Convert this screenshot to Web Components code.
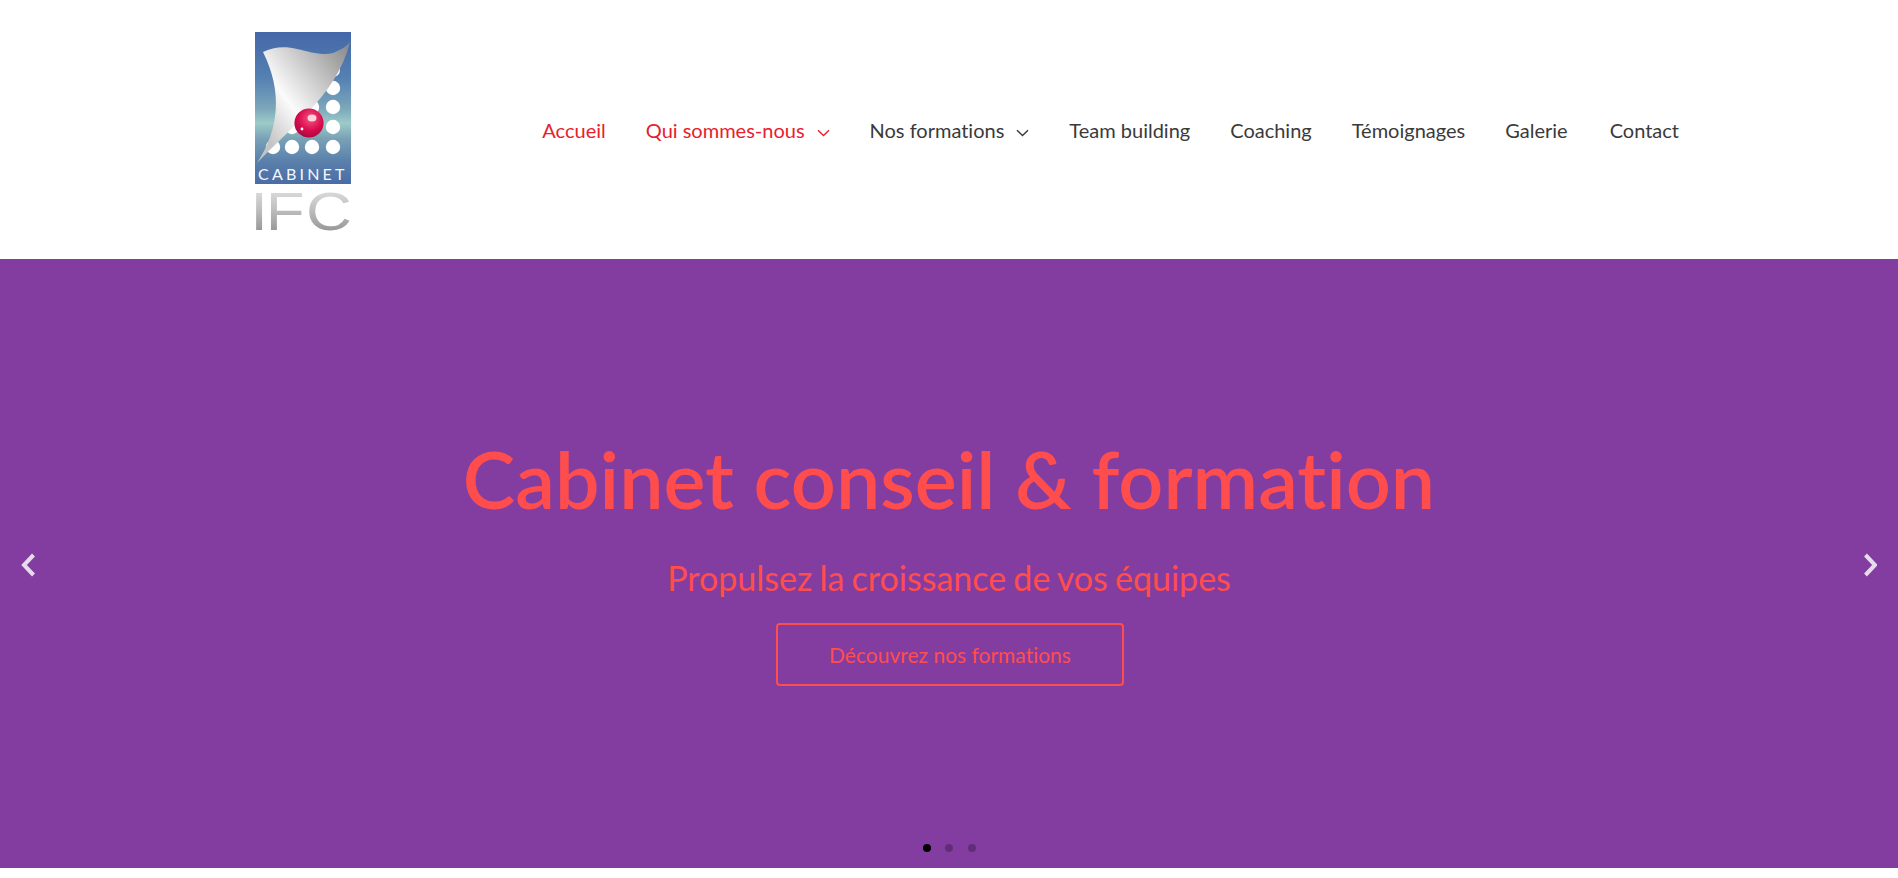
<!DOCTYPE html>
<html lang="fr">
<head>
<meta charset="utf-8">
<title>Cabinet IFC</title>
<style>
  html, body { margin: 0; background: #fff; }
  body { font-family: Lato, "Liberation Sans", sans-serif; font-variant-ligatures: none; }
</style>
</head>
<body>
<site-header>
  <ifc-logo slot="logo"></ifc-logo>
  <nav-item current>Accueil</nav-item>
  <nav-item current sub>Qui sommes-nous</nav-item>
  <nav-item sub>Nos formations</nav-item>
  <nav-item>Team building</nav-item>
  <nav-item>Coaching</nav-item>
  <nav-item>Témoignages</nav-item>
  <nav-item>Galerie</nav-item>
  <nav-item style="margin-left:2px">Contact</nav-item>
</site-header>
<hero-slider>
  <span slot="title">Cabinet conseil &amp; formation</span>
  <span slot="subtitle">Propulsez la croissance de vos équipes</span>
  <span slot="cta">Découvrez nos formations</span>
</hero-slider>

<script>
class IfcLogo extends HTMLElement {
    connectedCallback() {
        this.attachShadow({ mode: 'open' });
        this.shadowRoot.innerHTML = `
            <style>
                :host { display: block; width: 96px; height: 200px; }
                svg { display: block; overflow: visible; }
                .cab { font-family: Lato, "Liberation Sans", sans-serif; }
                .ifc { font-family: "Liberation Sans", sans-serif; }
            </style>
            <svg width="96" height="200" viewBox="0 0 96 200">
                <defs>
                    <linearGradient id="bg" x1="0" y1="0" x2="0" y2="1">
                        <stop offset="0" stop-color="#4468a8"/>
                        <stop offset=".3" stop-color="#5580b2"/>
                        <stop offset=".5" stop-color="#7ba6ba"/>
                        <stop offset=".6" stop-color="#9ccbc8"/>
                        <stop offset=".7" stop-color="#7aa2b6"/>
                        <stop offset=".85" stop-color="#5a80ab"/>
                        <stop offset="1" stop-color="#4a6ca6"/>
                    </linearGradient>
                    <linearGradient id="sail" x1="1" y1="0" x2=".15" y2=".85">
                        <stop offset="0" stop-color="#858585"/>
                        <stop offset=".45" stop-color="#d4d4d4"/>
                        <stop offset=".68" stop-color="#fbfbfb"/>
                        <stop offset="1" stop-color="#c4c4c4"/>
                    </linearGradient>
                    <radialGradient id="ball" cx=".55" cy=".35" r=".7">
                        <stop offset="0" stop-color="#f4557f"/>
                        <stop offset=".6" stop-color="#d80a4e"/>
                        <stop offset="1" stop-color="#a00a3c"/>
                    </radialGradient>
                    <linearGradient id="ifc" x1="0" y1="0" x2="0" y2="1">
                        <stop offset="0" stop-color="#e8e8e8"/>
                        <stop offset=".45" stop-color="#c0c0c0"/>
                        <stop offset="1" stop-color="#858585"/>
                    </linearGradient>
                </defs>
                <rect width="96" height="152" fill="url(#bg)"/>
                <g fill="#fff">
                    <circle cx="78" cy="38" r="7"/>
                    <circle cx="78" cy="56" r="7.2"/><circle cx="57" cy="56" r="7.2"/>
                    <circle cx="78" cy="75" r="7.2"/><circle cx="57" cy="75" r="7.2"/>
                    <circle cx="78" cy="95" r="7.2"/><circle cx="37" cy="95" r="7.2"/>
                    <circle cx="78" cy="115" r="7.2"/><circle cx="57" cy="115" r="7.2"/>
                    <circle cx="37" cy="115" r="7.2"/><circle cx="18" cy="115" r="7.2"/>
                </g>
                <path d="M8 20 C18 15 30 14 42 17 C55 20 68 24 78 21 C86 18 92 14 95 10 C88 38 72 60 55 78 C38 96 16 116 2 131 C24 98 28 60 8 20Z" fill="url(#sail)"/>
                <circle cx="54" cy="91" r="14.6" fill="url(#ball)"/>
                <ellipse cx="57" cy="86" rx="4.5" ry="3.6" fill="#fbd3dd"/>
                <circle cx="47" cy="97" r="1.4" fill="#fff"/>
                <text class="cab" x="3" y="148" font-size="16" letter-spacing="3.2" fill="#f4f6fa">CABINET</text>
                <text class="ifc" transform="scale(1.2 1)" x="-4 9 42.5" y="198" font-size="53" fill="url(#ifc)">IFC</text>
            </svg>
        `;
    }
}

class NavItem extends HTMLElement {
    connectedCallback() {
        this.attachShadow({ mode: 'open' });
        const caret = this.hasAttribute('sub')
            ? `<svg width="13" height="8" viewBox="0 0 13 8"><path d="M1 1.2 L6.5 6.6 L12 1.2" fill="none" stroke="currentColor" stroke-width="1.4"/></svg>`
            : '';
        this.shadowRoot.innerHTML = `
            <style>
                :host {
                    display: flex;
                    align-items: center;
                    gap: 12px;
                    font-size: 20px;
                    line-height: 30px;
                    color: #3a3a3a;
                    cursor: pointer;
                }
                :host([current]) { color: #e8202c; }
                svg { display: block; margin-top: 6px; }
            </style>
            <slot></slot>${caret}
        `;
    }
}

class SiteHeader extends HTMLElement {
    connectedCallback() {
        this.attachShadow({ mode: 'open' });
        this.shadowRoot.innerHTML = `
            <style>
                :host {
                    display: flex;
                    align-items: center;
                    height: 259px;
                    box-sizing: border-box;
                    padding: 32px 219px 27px 255px;
                    background: #fff;
                }
                nav {
                    margin-left: auto;
                    margin-top: -5px;
                    display: flex;
                    align-items: center;
                    gap: 40px;
                }
            </style>
            <slot name="logo"></slot>
            <nav><slot></slot></nav>
        `;
    }
}

class HeroSlider extends HTMLElement {
    connectedCallback() {
        this.attachShadow({ mode: 'open' });
        this.shadowRoot.innerHTML = `
            <style>
                :host {
                    display: flex;
                    flex-direction: column;
                    align-items: center;
                    position: relative;
                    height: 609px;
                    box-sizing: border-box;
                    padding-top: 167px;
                    background: #833da0;
                    color: #ff4d4d;
                }
                .title { font-size: 79px; line-height: 106px; font-weight: 600; }
                .subtitle { font-size: 34px; line-height: 50px; margin-top: 21px; word-spacing: -1.5px; }
                .cta {
                    margin: 20px 0 0 2px;
                    width: 348px;
                    height: 63px;
                    box-sizing: border-box;
                    display: flex;
                    align-items: center;
                    justify-content: center;
                    border: 2px solid #ff4d4d;
                    border-radius: 4px;
                    font-size: 21px;
                }
                .arrow { position: absolute; top: 294px; display: block; }
                .prev { left: 21px; }
                .next { right: 21px; }
                .dots {
                    position: absolute;
                    left: 0;
                    right: 0;
                    bottom: 16px;
                    display: flex;
                    justify-content: center;
                    gap: 14.5px;
                }
                .dots i { width: 8px; height: 8px; border-radius: 50%; background: #000; opacity: .25; }
                .dots i:first-child { opacity: 1; }
            </style>
            <div class="title"><slot name="title"></slot></div>
            <div class="subtitle"><slot name="subtitle"></slot></div>
            <div class="cta"><slot name="cta"></slot></div>
            <svg class="arrow prev" width="16" height="24" viewBox="0 0 16 24"><path d="M12.5 2 L3 12 L12.5 22" fill="none" stroke="#e6dcee" stroke-width="4"/></svg>
            <svg class="arrow next" width="16" height="24" viewBox="0 0 16 24"><path d="M4.5 2 L14 12 L4.5 22" fill="none" stroke="#e6dcee" stroke-width="4"/></svg>
            <div class="dots"><i></i><i></i><i></i></div>
        `;
    }
}

customElements.define('ifc-logo', IfcLogo);
customElements.define('nav-item', NavItem);
customElements.define('site-header', SiteHeader);
customElements.define('hero-slider', HeroSlider);
</script>
</body>
</html>
